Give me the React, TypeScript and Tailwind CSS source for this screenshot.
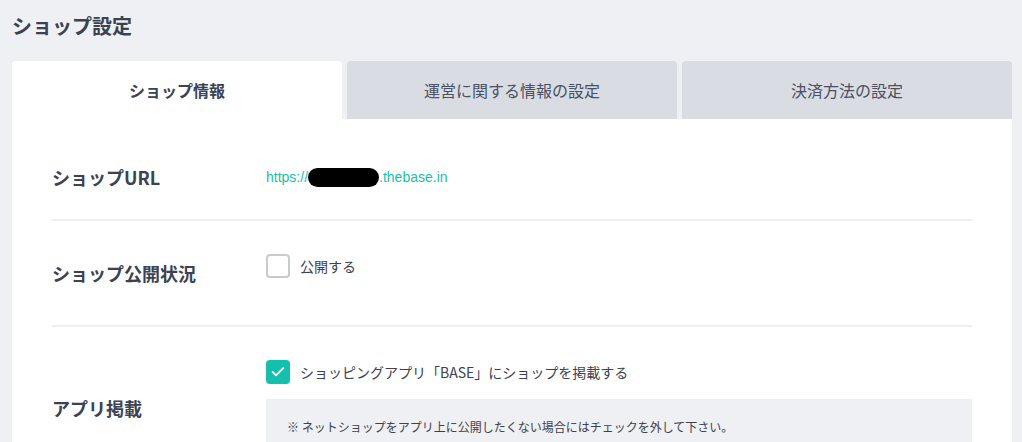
import { Check } from 'lucide-react';

const FONT = { fontFamily: '"Noto Sans CJK JP", "Noto Sans", sans-serif' };

const TABS = [
  { label: 'ショップ情報', active: true },
  { label: '運営に関する情報の設定', active: false },
  { label: '決済方法の設定', active: false },
];

function Checkbox({ checked }: { checked: boolean }) {
  return checked ? (
    <span className="flex h-6 w-6 shrink-0 items-center justify-center rounded-[4px] bg-[#14bfad]">
      <Check className="h-4 w-4 text-white" strokeWidth={2.75} />
    </span>
  ) : (
    <span className="h-6 w-6 shrink-0 rounded-[4px] border-2 border-[#c7cad2] bg-white" />
  );
}

function Row({ label, children, last }: { label: string; children: React.ReactNode; last?: boolean }) {
  return (
    <div className={`flex ${last ? '' : 'border-b-2 border-[#eeeff3]'}`}>
      <div className="flex w-[214px] shrink-0 items-center text-[18px] font-bold text-[#3a4254]">{label}</div>
      <div className="flex-1 py-[33px]">{children}</div>
    </div>
  );
}

export default function App() {
  return (
    <div className="min-h-screen bg-[#eff0f4] pl-3 pr-[10px] pt-[12px]" style={FONT}>
      <h1 className="text-[20px] font-bold leading-[28px] text-[#3a4254]">ショップ設定</h1>

      {/* Tabs */}
      <div className="mt-[21px] flex gap-[5px]">
        {TABS.map(({ label, active }) => (
          <div
            key={label}
            className={`flex h-[58px] flex-1 items-center justify-center rounded-t-[4px] text-[16px] ${
              active ? 'bg-white font-bold text-[#3a4254]' : 'bg-[#d9dce3] text-[#4a5062]'
            }`}
          >
            {label}
          </div>
        ))}
      </div>

      {/* Panel */}
      <div className="bg-white px-10 pt-4">
        <Row label="ショップURL">
          <div className="flex h-[18px] items-center text-[14px] text-[#19bfad]" style={{ fontFamily: '"Liberation Sans", Arial, sans-serif' }}>
            <span>https://</span>
            <span className="inline-block h-[19px] w-[71px] rounded-full bg-black" />
            <span>.thebase.in</span>
          </div>
        </Row>

        <Row label="ショップ公開状況">
          <div className="flex h-[38px] items-start gap-[10px]">
            <Checkbox checked={false} />
            <span className="text-[14px] leading-6 text-[#3c4150]">公開する</span>
          </div>
        </Row>

        <Row label="アプリ掲載" last>
          <div className="flex items-center gap-[10px]">
            <Checkbox checked />
            <span className="text-[14px] leading-6 text-[#3c4150]">ショッピングアプリ「BASE」にショップを掲載する</span>
          </div>
          <div className="mt-[15px] bg-[#eff0f4] px-[21px] pb-[22px] pt-[20px] text-[12px] leading-[15px] text-[#3c4150]">
            ※ ネットショップをアプリ上に公開したくない場合にはチェックを外して下さい。
          </div>
        </Row>
      </div>
    </div>
  );
}
